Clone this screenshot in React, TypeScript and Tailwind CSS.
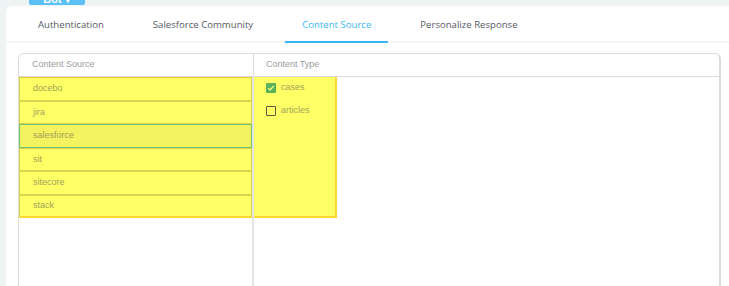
import React from "react";

const sources = ["docebo", "jira", "salesforce", "sit", "sitecore", "stack"];

export default function App() {
  return (
    <div className="relative h-[286px] w-[729px] overflow-hidden bg-[#eef4f4]" style={{ fontFamily: "'Liberation Sans', Arial, sans-serif" }}>
      <div className="absolute left-[29px] top-[-9px] flex h-[14px] w-[56px] items-end justify-center rounded-b-[2px] bg-[#5bc0f8] text-[11px] font-semibold text-white">
        <span className="leading-[12px]">Bot ▾</span>
      </div>
      <div className="ml-[6px] mt-[6px] h-[300px] rounded-tl-[6px] bg-white">
        <div className="flex h-[37px] items-stretch gap-[15px] border-b-2 border-[#f4f5f5] pl-[15px]" style={{ fontFamily: "'Open Sans', sans-serif" }}>
          {["Authentication", "Salesforce Community", "Content Source", "Personalize Response"].map((t, i) => (
            <div
              key={t}
              className={
                "flex items-center px-[17px] pt-[3px] text-[9.6px] " +
                (i === 2 ? "mb-[-2px] border-b-2 border-[#3bb7f5] text-[#3bb7f5]" : "text-[#555a66]")
              }
            >
              {t}
            </div>
          ))}
        </div>
        <div className="ml-[12px] mr-[8px] mt-[10px] h-[260px] rounded-t-[6px] border border-r-2 border-[#dcdcdc]">
          <div className="flex h-[23px] border-b border-[#dcdcdc] text-[9px] text-[#9c9c9c]">
            <div className="flex w-[235px] items-center border-r border-[#dcdcdc] pl-[13px]">Content Source</div>
            <div className="flex items-center pl-[12px]">Content Type</div>
          </div>
          <div className="flex h-[236px]">
            <div className="w-[235px] border-r-2 border-[#e4e4e4]">
              <div className="flex flex-col">
                {sources.map((s, i) => (
                  <div
                    key={s}
                    className={
                      "flex h-[23.5px] items-center pl-[13px] text-[9px] text-[#a2a25a] " +
                      (s === "salesforce"
                        ? "border border-[#6cc36c] bg-[#f5f260]"
                        : "border border-[#d8d450] bg-[#ffff66]") +
                      (i === 0 ? " border-t-[#e8c830]" : "") +
                      (i === sources.length - 1 ? " border-b-2 border-b-[#ffd633]" : "")
                    }
                  >
                    {s}
                  </div>
                ))}
              </div>
            </div>
            <div className="h-[141px] w-[83px] border-b-2 border-r-2 border-[#ffd633] bg-[#ffff66] pl-[12px] pt-[5px]">
              <div className="flex h-[12px] items-center gap-[5px] text-[9px] text-[#a2a25a]">
                <span className="flex h-[10px] w-[10px] items-center justify-center rounded-[1px] bg-[#5ab35a]">
                  <svg width="8" height="8" viewBox="0 0 8 8">
                    <path d="M1.2 4.2 L3.2 6 L6.8 1.8" stroke="#ffff8a" strokeWidth="1.2" fill="none" />
                  </svg>
                </span>
                cases
              </div>
              <div className="mt-[11px] flex h-[12px] items-center gap-[5px] text-[9px] text-[#a2a25a]">
                <span className="h-[10px] w-[10px] rounded-[1px] border-[1.5px] border-[#5a5a3a]" />
                articles
              </div>
            </div>
          </div>
        </div>
      </div>
    </div>
  );
}
